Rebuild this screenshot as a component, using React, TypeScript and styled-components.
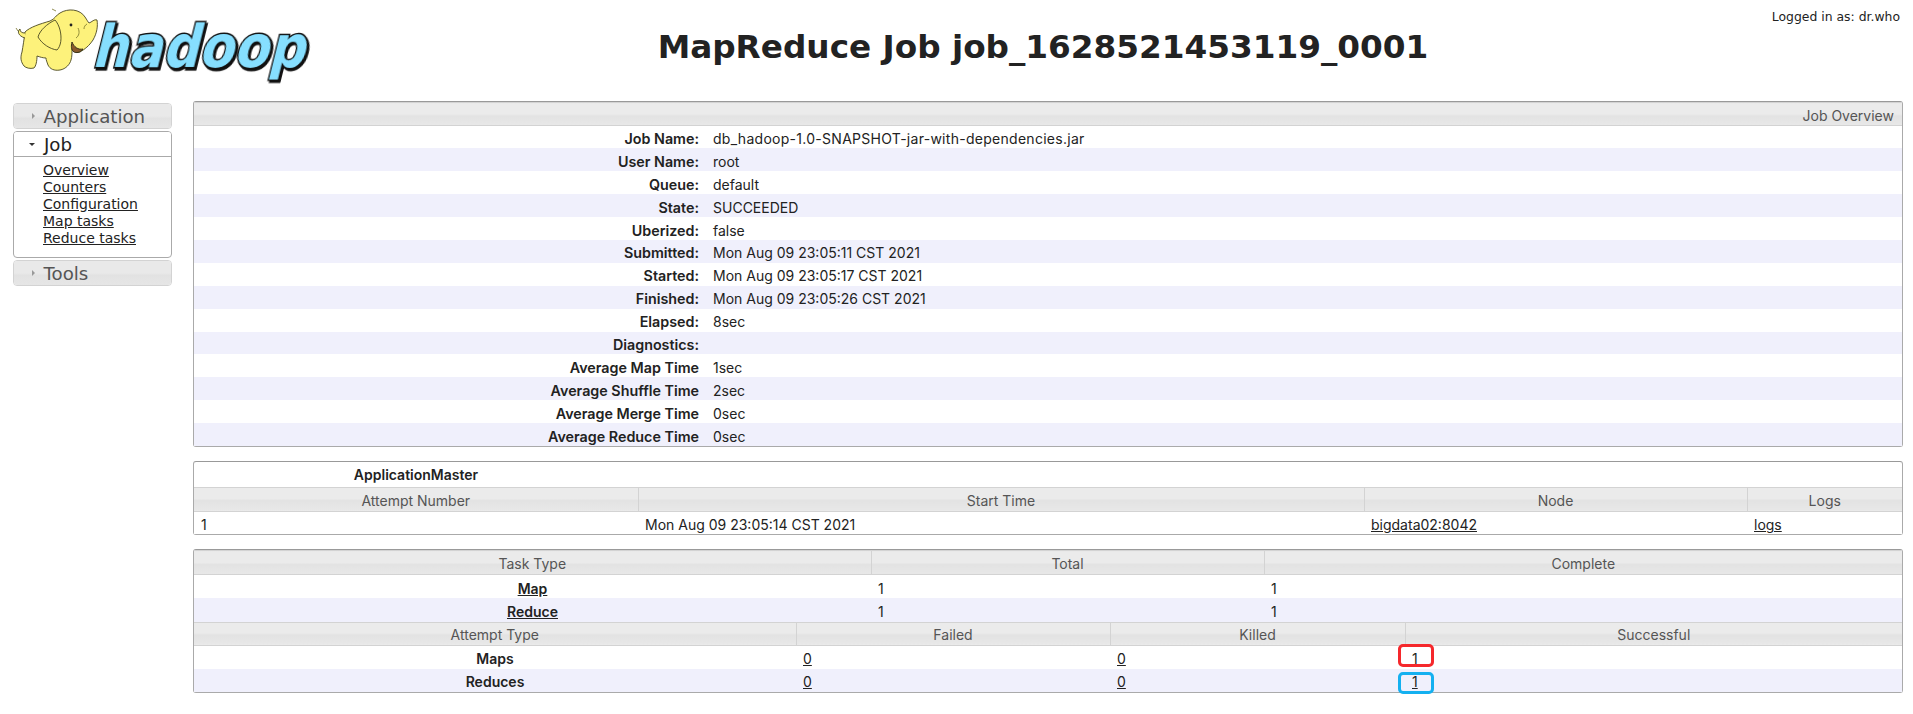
import React from 'react';
import styled, {createGlobalStyle} from 'styled-components';

const GlobalStyle = createGlobalStyle`
  html, body {
    margin: 0;
    padding: 0;
    background: #fff;
    color: #222;
    font-family: Inter, "Liberation Sans", Arial, sans-serif;
  }
`;

const Page = styled.div`
  width: 1913px;
  height: 714px;
  overflow: hidden;
`;

const Header = styled.header`
  height: 101px;
  position: relative;
  display: flex;
  justify-content: center;
  padding-left: 173px;
  box-sizing: border-box;
`;

const LogoLink = styled.div`
  position: absolute;
  left: 0;
  top: 0;
  line-height: 0;
`;

const Title = styled.h1`
  margin: 28px 0 0 0;
  font: bold 32.7px/38px "DejaVu Sans", Verdana, sans-serif;
  color: #222;
`;

const UserInfo = styled.div`
  position: absolute;
  right: 13px;
  top: 9px;
  font: 12.4px/16px "DejaVu Sans", Verdana, sans-serif;
  color: #222;
`;

const Body = styled.div`
  display: flex;
  align-items: flex-start;
`;

const Nav = styled.nav`
  width: 193px;
  flex: none;
  padding: 2px 21px 0 13px;
  box-sizing: border-box;
  font-family: "DejaVu Sans", Verdana, sans-serif;
`;

const Accordion = styled.div<{$open?: boolean}>`
  border: 1px solid ${p => (p.$open ? '#aaa' : '#d3d3d3')};
  border-radius: 4px;
  margin-bottom: 2px;
  overflow: hidden;
  background: #fff;
`;

const AccordionHead = styled.div<{$open?: boolean}>`
  height: 24px;
  display: flex;
  align-items: center;
  font-size: 18.2px;
  color: ${p => (p.$open ? '#222' : '#555')};
  background: ${p =>
    p.$open
      ? '#fff'
      : 'linear-gradient(to bottom, #e9e9e9 0, #e9e9e9 50%, #e2e2e2 60%, #e6e6e6 100%)'};
  border-bottom: ${p => (p.$open ? '1px solid #aaa' : 'none')};
`;

const Caret = styled.span<{$open?: boolean}>`
  width: 0;
  height: 0;
  margin: ${p => (p.$open ? '0 9px 0 15px' : '0 8.5px 0 18px')};
  border-style: solid;
  border-color: transparent;
  ${p =>
    p.$open
      ? 'border-width: 3px 3px 0 3px; border-top-color: #333;'
      : 'border-width: 3.5px 0 3.5px 3.5px; border-left-color: #999;'}
`;

const NavList = styled.ul`
  list-style: none;
  margin: 0;
  padding: 5px 0 10px 29px;
`;

const NavItem = styled.li`
  font-size: 14px;
  line-height: 17px;
  a {
    color: #222;
    text-decoration: underline;
  }
`;

const Content = styled.main`
  flex: 1;
  padding: 0 10px 0 0;
  min-width: 0;
`;

const Panel = styled.div`
  border: 1px solid #aaa;
  border-top-color: #999;
  border-radius: 3px;
  margin-bottom: 14px;
  background: #fff;
`;

const Table = styled.table`
  width: 100%;
  table-layout: fixed;
  border-collapse: collapse;
  font-size: 14px;
  color: #222;
`;

const HeadCell = styled.th<{$align?: string; $tall?: boolean}>`
  height: ${p => (p.$tall ? '24px' : '23px')};
  padding: 2px 8px 0;
  box-sizing: border-box;
  font-weight: normal;
  color: #555;
  text-align: ${p => p.$align || 'center'};
  background: linear-gradient(to bottom, #ebebeb 0, #ebebeb 50%, #e2e2e2 55%, #e8e8e8 100%);
  border-top: 1px solid #d3d3d3;
  border-bottom: 1px solid #d3d3d3;
  border-left: 1px solid #d3d3d3;
  &:first-child { border-left: none; }
`;

const Row = styled.tr<{$alt?: boolean; $tall?: boolean}>`
  height: ${p => (p.$tall ? '23.5px' : '22.9px')};
  background: ${p => (p.$alt ? '#f0f0fc' : '#fff')};
`;

const Label = styled.th`
  padding: 3px 7px 0 0;
  text-align: right;
  font-size: 14.3px;
  font-weight: 600;
  white-space: nowrap;
`;

const Value = styled.td<{$spaced?: boolean}>`
  padding: 3px 0 0 7px;
  letter-spacing: ${p => (p.$spaced ? '0.28px' : 'normal')};
`;

const Cell = styled.td`
  padding: 3px 7px 0;
  text-align: left;
`;

const PlainHead = styled.th`
  height: 24px;
  font-weight: 600;
  text-align: center;
  padding: 1px 0 0;
`;

const RowHead = styled.th`
  padding: 3px 0 0;
  text-align: center;
  font-weight: 600;
  a { color: #222; text-decoration: underline; }
`;

const Link = styled.a`
  color: #222;
  text-decoration: underline;
`;

const Highlight = styled.span<{$color: string; $top: number; $height: number}>`
  position: absolute;
  left: -14px;
  top: ${p => p.$top}px;
  width: 36px;
  height: ${p => p.$height}px;
  box-sizing: border-box;
  border: 3px solid ${p => p.$color};
  border-radius: 5px;
`;

const Marked = styled.span`
  position: relative;
  display: inline-block;
`;

const Word = styled.text`
  font-family: "DejaVu Sans", Verdana, sans-serif;
  font-weight: bold;
  font-size: 58px;
  fill: #86dfff;
  stroke: #111;
  stroke-width: 3px;
  paint-order: stroke;
  filter: drop-shadow(2px 2px 0 #111);
`;

const overview: [string, string][] = [
  ['Job Name:', 'db_hadoop-1.0-SNAPSHOT-jar-with-dependencies.jar'],
  ['User Name:', 'root'],
  ['Queue:', 'default'],
  ['State:', 'SUCCEEDED'],
  ['Uberized:', 'false'],
  ['Submitted:', 'Mon Aug 09 23:05:11 CST 2021'],
  ['Started:', 'Mon Aug 09 23:05:17 CST 2021'],
  ['Finished:', 'Mon Aug 09 23:05:26 CST 2021'],
  ['Elapsed:', '8sec'],
  ['Diagnostics:', ''],
  ['Average Map Time', '1sec'],
  ['Average Shuffle Time', '2sec'],
  ['Average Merge Time', '0sec'],
  ['Average Reduce Time', '0sec'],
];

function Logo() {
  return (
    <svg width="380" height="84" viewBox="0 0 380 84">
      <g transform="translate(17 0) skewX(-14)">
        <Word x="91" y="67" textLength="213" lengthAdjust="spacingAndGlyphs">hadoop</Word>
      </g>
      <path
        d="M25 32C30 27 40 24 50 21C55 19 56 15 60 13C68 8 80 9 85 17C87 20 88 22 89 23C92 22 94 19 97 20C98 26 97 33 93 40C89 46 85 49 80 52C77 53 74 52 72 49C72 53 72 57 71 60C70 64 66 69 60 70C54 71 50 69 48 65C47 62 46 60 46 58C43 58 40 57 37 56C37 61 36 66 34 68C30 69 26 68 24 66C21 62 20 58 22 52C23 46 24 40 25 32Z"
        fill="#fdf27b" stroke="#4a4720" strokeWidth="0.9" strokeLinejoin="round"
      />
      <path d="M25 33C22 33 20 32 20 29C17 31 18 36 25 38" fill="#fdf27b" stroke="#4a4720" strokeWidth="0.9" />
      <path d="M55 20C47 24 40 30 38 37C42 44 50 49 57 50C61 46 62 38 60 30C59 26 57 22 55 20Z" fill="#fdf27b" stroke="#4a4720" strokeWidth="0.9" />
      <path d="M72 42C74 47 78 50 83 49C80 53 76 53 74 52C71 50 71 46 72 42Z" fill="#8a5a2c" stroke="#2c2a12" strokeWidth="0.9" />
      <circle cx="71" cy="25" r="1.4" fill="#222" />
      <path d="M78 28C80 32 79 36 76 38M87 24C85 25 84 27 84 29M52 9L56 11M16 28L18 31" fill="none" stroke="#77722a" strokeWidth="0.8" />
    </svg>
  );
}

function App() {
  return (
    <Page>
      <GlobalStyle />
      <Header>
        <LogoLink><Logo /></LogoLink>
        <Title>MapReduce Job job_1628521453119_0001</Title>
        <UserInfo>Logged in as: dr.who</UserInfo>
      </Header>
      <Body>
        <Nav>
          <Accordion>
            <AccordionHead><Caret />Application</AccordionHead>
          </Accordion>
          <Accordion $open>
            <AccordionHead $open><Caret $open />Job</AccordionHead>
            <NavList>
              {['Overview', 'Counters', 'Configuration', 'Map tasks', 'Reduce tasks'].map(item => (
                <NavItem key={item}><a href="#">{item}</a></NavItem>
              ))}
            </NavList>
          </Accordion>
          <Accordion>
            <AccordionHead><Caret />Tools</AccordionHead>
          </Accordion>
        </Nav>
        <Content>
          <Panel>
            <Table>
              <colgroup><col width="512" /><col /></colgroup>
              <thead>
                <tr><HeadCell colSpan={2} $align="right">Job Overview</HeadCell></tr>
              </thead>
              <tbody>
                {overview.map(([k, v], i) => (
                  <Row key={k} $alt={i % 2 === 1}>
                    <Label>{k}</Label>
                    <Value $spaced={i === 0}>{v}</Value>
                  </Row>
                ))}
              </tbody>
            </Table>
          </Panel>
          <Panel>
            <Table>
              <colgroup><col width="444" /><col width="726" /><col width="383" /><col /></colgroup>
              <thead>
                <tr><PlainHead>ApplicationMaster</PlainHead><PlainHead colSpan={3} /></tr>
                <tr>
                  <HeadCell $tall>Attempt Number</HeadCell>
                  <HeadCell $tall>Start Time</HeadCell>
                  <HeadCell $tall>Node</HeadCell>
                  <HeadCell $tall>Logs</HeadCell>
                </tr>
              </thead>
              <tbody>
                <Row>
                  <Cell>1</Cell>
                  <Cell>Mon Aug 09 23:05:14 CST 2021</Cell>
                  <Cell><Link href="#">bigdata02:8042</Link></Cell>
                  <Cell><Link href="#">logs</Link></Cell>
                </Row>
              </tbody>
            </Table>
          </Panel>
          <Panel>
            <Table>
              <colgroup><col width="677" /><col width="393" /><col /></colgroup>
              <thead>
                <tr>
                  <HeadCell $tall>Task Type</HeadCell>
                  <HeadCell $tall>Total</HeadCell>
                  <HeadCell $tall>Complete</HeadCell>
                </tr>
              </thead>
              <tbody>
                <Row $tall>
                  <RowHead><a href="#">Map</a></RowHead>
                  <Cell>1</Cell>
                  <Cell>1</Cell>
                </Row>
                <Row $alt $tall>
                  <RowHead><a href="#">Reduce</a></RowHead>
                  <Cell>1</Cell>
                  <Cell>1</Cell>
                </Row>
              </tbody>
            </Table>
            <Table>
              <colgroup><col width="602" /><col width="314" /><col width="295" /><col /></colgroup>
              <thead>
                <tr>
                  <HeadCell>Attempt Type</HeadCell>
                  <HeadCell>Failed</HeadCell>
                  <HeadCell>Killed</HeadCell>
                  <HeadCell>Successful</HeadCell>
                </tr>
              </thead>
              <tbody>
                <Row $tall>
                  <RowHead>Maps</RowHead>
                  <Cell><Link href="#">0</Link></Cell>
                  <Cell><Link href="#">0</Link></Cell>
                  <Cell>
                    <Marked><Link href="#">1</Link><Highlight $color="#f5282c" $top={-6} $height={23} /></Marked>
                  </Cell>
                </Row>
                <Row $alt>
                  <RowHead>Reduces</RowHead>
                  <Cell><Link href="#">0</Link></Cell>
                  <Cell><Link href="#">0</Link></Cell>
                  <Cell>
                    <Marked><Link href="#">1</Link><Highlight $color="#14b0f0" $top={-1} $height={22} /></Marked>
                  </Cell>
                </Row>
              </tbody>
            </Table>
          </Panel>
        </Content>
      </Body>
    </Page>
  );
}

export default App;
